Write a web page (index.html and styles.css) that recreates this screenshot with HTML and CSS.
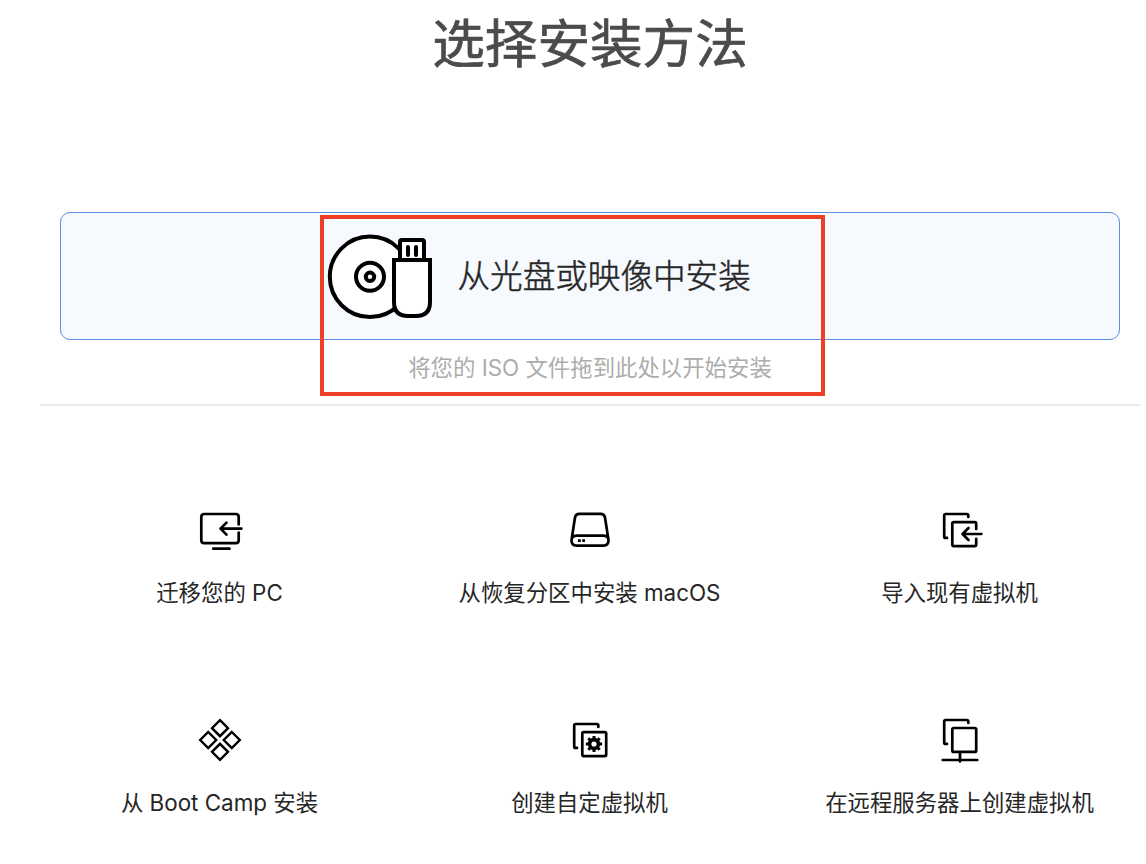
FILE: index.html
```html
<!DOCTYPE html>
<html lang="zh-CN">
<head>
<meta charset="utf-8">
<title>选择安装方法</title>
<link rel="stylesheet" href="styles.css">
</head>
<body>
<main class="assistant">
  <h1 class="title">选择安装方法</h1>
  <section class="primary">
    <button class="install-card">
      <svg class="media-icon" width="108" height="90" viewBox="326 231 108 90">
        <g fill="#fff" stroke="#000" stroke-width="4">
          <circle cx="370" cy="276.8" r="40.2"/>
          <circle cx="370" cy="276.8" r="14"/>
          <circle cx="370" cy="276.8" r="4.2"/>
          <path d="M400 260V242q0-2 2-2h20q2 0 2 2v18"/>
          <path d="M394 260h36v42q0 14-14 14h-8q-14 0-14-14z"/>
        </g>
        <path d="M408 247v8M416 247v8" stroke="#000" stroke-width="4" stroke-linecap="round"/>
      </svg>
      <span class="install-label">从光盘或映像中安装</span>
    </button>
    <p class="hint">将您的 ISO 文件拖到此处以开始安装</p>
    <div class="highlight"></div>
  </section>
  <section class="options">
    <button class="option">
      <svg class="icon" viewBox="0 0 80 60">
        <path d="M58.7 24.5V17q0-3-3-3H24.3q-3 0-3 3v23.2q0 3 3 3h31.4q3 0 3-3V32.5M61.4 28.6H40.5M46.5 22.6l-6 6 6 6M33.3 48.7h16.2"/>
      </svg>
      <span class="option-label">迁移您的 PC</span>
    </button>
    <button class="option">
      <svg class="icon" viewBox="0 0 80 60">
        <path d="M21.6 39.5L25 17.5q.6-3.7 4.2-3.7h21.6q3.6 0 4.2 3.7l3.4 22M26.5 35.6h27q5 0 5 5t-5 5h-27q-5 0-5-5t5-5z"/>
        <path class="solid" d="M28 39.2h2.8v2.8H28zM32.2 39.2h2.8v2.8h-2.8z"/>
      </svg>
      <span class="option-label">从恢复分区中安装 macOS</span>
    </button>
    <button class="option">
      <svg class="icon" viewBox="0 0 80 60">
        <path d="M48.3 17V15.5q0-1.5-1.5-1.5H25.7q-1.5 0-1.5 1.5v20.9q0 1.5 1.5 1.5H27M56.2 29V23.7q0-1.5-1.5-1.5H33.8q-1.5 0-1.5 1.5v20.9q0 1.5 1.5 1.5h20.9q1.5 0 1.5-1.5V38.8M61.4 34H42.5M48.5 28l-6 6 6 6"/>
      </svg>
      <span class="option-label">导入现有虚拟机</span>
    </button>
    <button class="option">
      <svg class="icon diamonds" viewBox="0 0 80 60">
        <path d="M40 10.2l8 8-8 8-8-8zM28.2 22l8 8-8 8-8-8zM51.8 22l8 8-8 8-8-8zM40 33.8l8 8-8 8-8-8z"/>
      </svg>
      <span class="option-label">从 Boot Camp 安装</span>
    </button>
    <button class="option">
      <svg class="icon" viewBox="0 0 80 60">
        <path d="M48.3 17V15.5q0-1.5-1.5-1.5H25.7q-1.5 0-1.5 1.5v20.9q0 1.5 1.5 1.5H27M33.8 22.2h20.9q1.5 0 1.5 1.5v20.9q0 1.5-1.5 1.5H33.8q-1.5 0-1.5-1.5V23.7q0-1.5 1.5-1.5z"/>
        <circle class="gear" cx="44" cy="34" r="4.4"/>
        <path class="teeth" d="M44 29.5v-3.6M44 38.5v3.6M39.5 34h-3.6M48.5 34h3.6M40.8 30.8l-2.5-2.5M47.2 30.8l2.5-2.5M40.8 37.2l-2.5 2.5M47.2 37.2l2.5 2.5"/>
      </svg>
      <span class="option-label">创建自定虚拟机</span>
    </button>
    <button class="option">
      <svg class="icon" viewBox="0 0 80 60">
        <path d="M48.3 13V11.5q0-1.5-1.5-1.5H25.7q-1.5 0-1.5 1.5v20.9q0 1.5 1.5 1.5H27M33.8 18h20.9q1.5 0 1.5 1.5v20.9q0 1.5-1.5 1.5H33.8q-1.5 0-1.5-1.5V19.5q0-1.5 1.5-1.5zM40 42v9.5M22.7 50h34.6"/>
      </svg>
      <span class="option-label">在远程服务器上创建虚拟机</span>
    </button>
  </section>
</main>
</body>
</html>
```
FILE: styles.css
```css
* { box-sizing: border-box; }

body {
  margin: 0;
  background: #fff;
  color: #262626;
  font-family: Inter, "Noto Sans CJK SC", sans-serif;
}

button {
  margin: 0;
  padding: 0;
  border: 0;
  background: none;
  color: inherit;
  font: inherit;
}

.assistant {
  height: 864px;
  padding: 0 1px 0 35px;
  overflow: hidden;
}

.title {
  margin: 0;
  padding-top: 4px;
  height: 212px;
  color: #4b4b4b;
  font-size: 52.6px;
  font-weight: 400;
  line-height: 80px;
  text-align: center;
  -webkit-text-stroke: 0.7px #4b4b4b;
}

.primary {
  position: relative;
  height: 194px;
  margin: 0 5px;
  padding: 0 20px;
  border-bottom: 2px solid #ebebeb;
}

.install-card {
  display: flex;
  align-items: center;
  gap: 23.5px;
  width: 100%;
  height: 128px;
  padding-left: 265px;
  border: 1px solid #5b8ee6;
  border-radius: 10px;
  background: #f6f9fe;
}

.media-icon { flex: none; }

.install-label {
  font-size: 32.6px;
  font-weight: 300;
  line-height: 48px;
  white-space: nowrap;
  -webkit-text-stroke: 0.5px #262626;
}

.hint {
  margin: 12px 0 0;
  color: #acacac;
  font-size: 22.4px;
  line-height: 32px;
  text-align: center;
}

.highlight {
  position: absolute;
  top: 3px;
  left: 280px;
  width: 505px;
  height: 181px;
  border: 4px solid #eb4026;
}

.options {
  display: grid;
  grid-template-columns: repeat(3, 1fr);
  grid-auto-rows: 210px;
  padding-top: 94px;
}

.option {
  display: flex;
  flex-direction: column;
  align-items: center;
  gap: 17px;
}

.icon {
  width: 80px;
  height: 60px;
  fill: none;
  stroke: #000;
  stroke-width: 2.7;
  stroke-linecap: round;
  stroke-linejoin: round;
}

.icon .solid {
  fill: #000;
  stroke: none;
}

.icon .gear { stroke-width: 3.6; }

.icon .teeth {
  stroke-width: 3;
  stroke-linecap: butt;
}

.diamonds {
  stroke-width: 2.4;
  stroke-linejoin: miter;
}

.option-label {
  margin-right: 1px;
  font-size: 22.4px;
  line-height: 31px;
  white-space: nowrap;
}
```
